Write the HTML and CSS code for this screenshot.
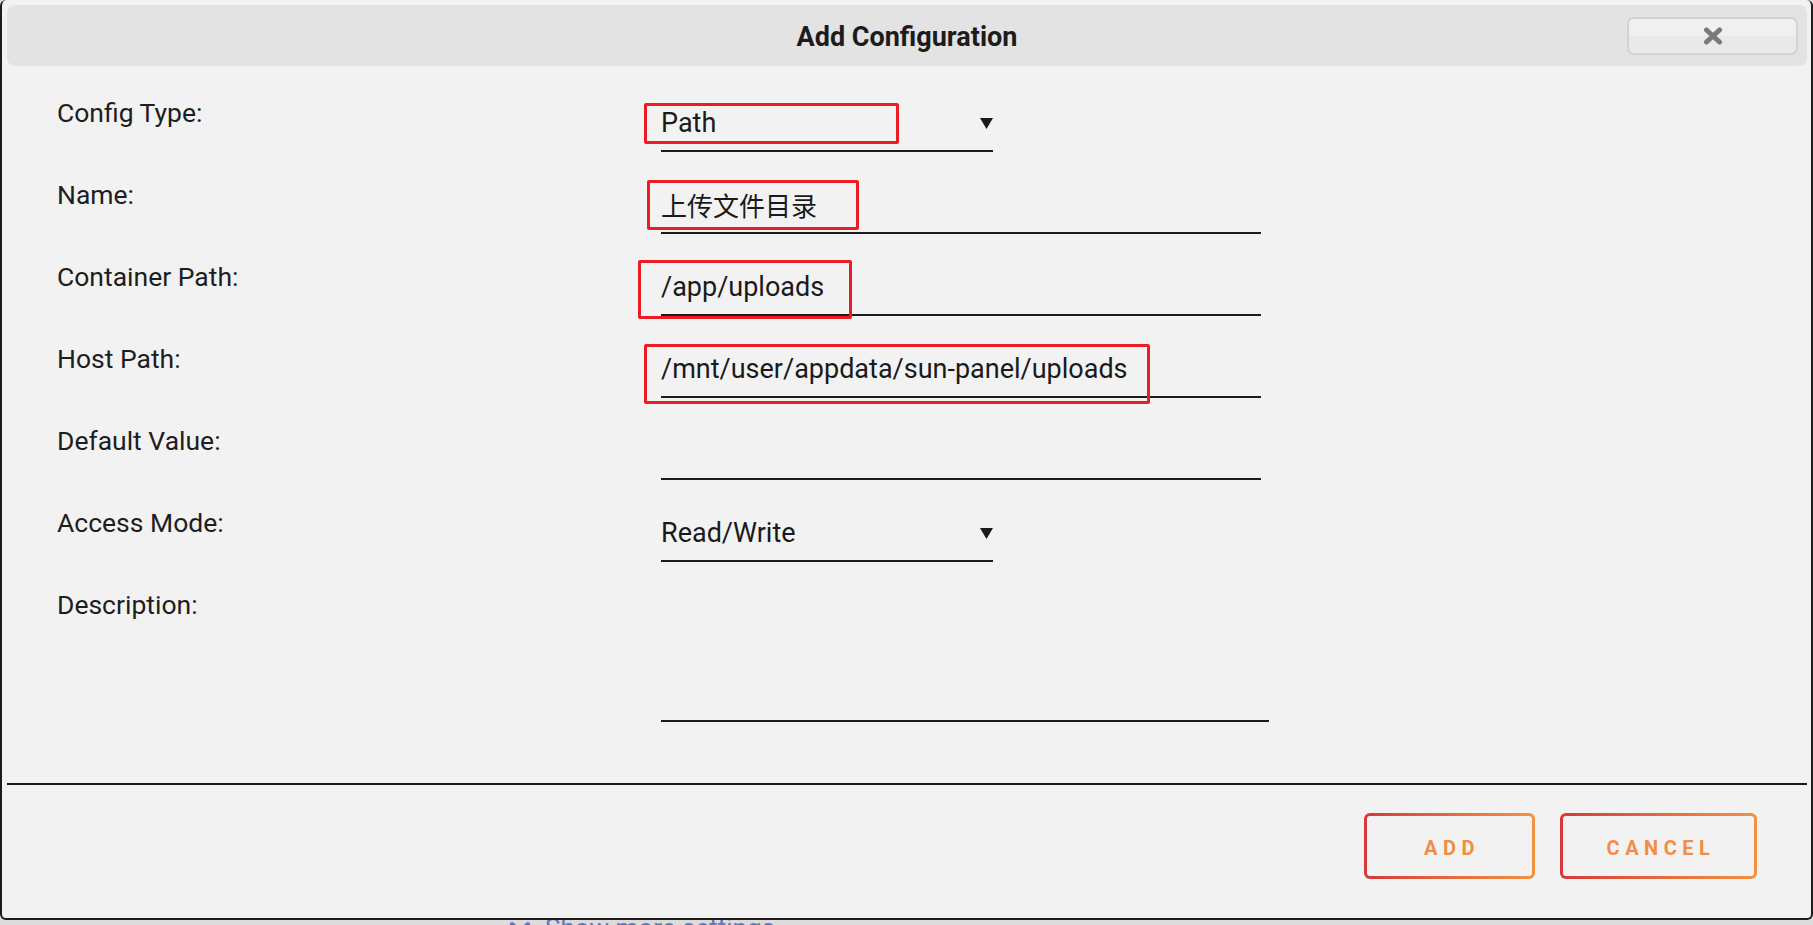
FILE: index.html
```html
<!DOCTYPE html>
<html lang="en">
<head>
<meta charset="utf-8">
<title>Add Configuration</title>
<link rel="stylesheet" href="styles.css">
</head>
<body>
<div class="dialog">
  <div class="header">
    <div class="title">Add Configuration</div>
    <button class="close" type="button" aria-label="Close">
      <svg width="20" height="18" viewBox="0 0 20 18"><path d="M3.5 3 L16.5 15 M16.5 3 L3.5 15" stroke="#7a7a7a" stroke-width="5" stroke-linecap="round"/></svg>
    </button>
  </div>

  <div class="form">
    <div class="label">Config Type:</div>
    <div class="field select">
      <span class="value">Path</span>
      <svg class="arrow" width="13" height="11" viewBox="0 0 13 11"><polygon points="0,0 13,0 6.5,11" fill="#1a1a1a"/></svg>
      <span class="mark mark-type"></span>
    </div>

    <div class="label">Name:</div>
    <div class="field text">
      <span class="value cjk">上传文件目录</span>
      <span class="mark mark-name"></span>
    </div>

    <div class="label">Container Path:</div>
    <div class="field text">
      <span class="value">/app/uploads</span>
      <span class="mark mark-container"></span>
    </div>

    <div class="label">Host Path:</div>
    <div class="field text">
      <span class="value">/mnt/user/appdata/sun-panel/uploads</span>
      <span class="mark mark-host"></span>
    </div>

    <div class="label">Default Value:</div>
    <div class="field text">
      <span class="value"></span>
    </div>

    <div class="label">Access Mode:</div>
    <div class="field select">
      <span class="value">Read/Write</span>
      <svg class="arrow" width="13" height="11" viewBox="0 0 13 11"><polygon points="0,0 13,0 6.5,11" fill="#1a1a1a"/></svg>
    </div>

    <div class="label">Description:</div>
    <div class="field desc"></div>
  </div>

  <div class="separator"></div>

  <div class="actions">
    <button class="btn btn-add" type="button"><span>ADD</span></button>
    <button class="btn btn-cancel" type="button"><span>CANCEL</span></button>
  </div>
</div>
<div class="below">
  <div class="more">
    <svg width="22" height="14" viewBox="0 0 22 14"><path d="M3 3 L11 10 L19 3" stroke="#6378b8" stroke-width="4" fill="none" stroke-linecap="round" stroke-linejoin="round"/></svg>
    <span>Show more settings</span>
  </div>
</div>
</body>
</html>
```

FILE: styles.css
```css
html, body {
  margin: 0;
  padding: 0;
}

body {
  background: #dcdcdc;
  font-family: Roboto, "Noto Sans CJK SC", sans-serif;
  color: #1b1b1b;
  overflow: hidden;
}

.dialog {
  width: 1813px;
  height: 920px;
  box-sizing: border-box;
  background: #f2f2f2;
  border: 2px solid #1c1c1c;
  border-top: 0;
  border-radius: 6px;
  display: flex;
  flex-direction: column;
}

.header {
  position: relative;
  height: 61px;
  margin: 5px 4px 0 5px;
  background: #e3e3e3;
  border-radius: 8px;
  display: flex;
  align-items: center;
  justify-content: center;
}

.title {
  font-size: 27px;
  font-weight: 700;
  color: #1c1c1c;
  line-height: 30px;
  padding-top: 2px;
}

.close {
  position: absolute;
  right: 9px;
  top: 12px;
  width: 171px;
  height: 38px;
  box-sizing: border-box;
  border: 2px solid #d3d3d3;
  border-radius: 7px;
  background: linear-gradient(#f1f1f1 0%, #efefef 50%, #e8e8e8 52%, #eaeaea 100%);
  display: flex;
  align-items: center;
  justify-content: center;
  padding: 0;
}

.form {
  margin: 32px 0 0 55px;
  display: grid;
  grid-template-columns: 604px auto;
  justify-content: start;
  row-gap: 28px;
  align-items: start;
}

.label {
  font-size: 26.5px;
  line-height: 30px;
  color: #1e1e1e;
}

.field {
  position: relative;
  margin-top: 10px;
  height: 30px;
  padding-bottom: 12px;
  border-bottom: 2px solid #1c1c1c;
  display: flex;
  align-items: center;
  font-size: 27px;
  line-height: 30px;
  color: #1a1a1a;
}

.field.select {
  width: 332px;
  justify-content: space-between;
}

.field.text {
  width: 600px;
}

.field.desc {
  width: 608px;
  height: 108px;
}

.value {
  white-space: nowrap;
}

.cjk {
  font-family: "Noto Sans CJK SC", sans-serif;
  font-size: 26px;
}

.arrow {
  display: block;
  margin-top: 0;
}

.mark {
  position: absolute;
  box-sizing: border-box;
  border: 3px solid #ec1c24;
  border-radius: 2px;
  pointer-events: none;
}

.mark-type {
  left: -17px;
  top: -5px;
  width: 255px;
  height: 41px;
}

.mark-name {
  left: -14px;
  top: -10px;
  width: 212px;
  height: 50px;
}

.mark-container {
  left: -23px;
  top: -12px;
  width: 214px;
  height: 59px;
}

.mark-host {
  left: -17px;
  top: -10px;
  width: 506px;
  height: 60px;
}

.separator {
  height: 2px;
  background: #1c1c1c;
  margin: 61px 4px 0 5px;
}

.actions {
  margin-top: 28px;
  padding-right: 54px;
  display: flex;
  justify-content: flex-end;
  gap: 25px;
}

.btn {
  height: 66px;
  box-sizing: border-box;
  border: 3px solid transparent;
  border-radius: 6px;
  background:
    linear-gradient(#f2f2f2, #f2f2f2) padding-box,
    linear-gradient(90deg, #d5393a 0%, #e5693d 50%, #f2923f 100%) border-box;
  font-family: Roboto, sans-serif;
  font-size: 20px;
  font-weight: 700;
  letter-spacing: 5.5px;
  color: #ef8e44;
  display: flex;
  align-items: center;
  justify-content: center;
  padding: 3px 0 0 5px;
}

.btn-add {
  width: 171px;
}

.btn-cancel {
  width: 197px;
}

.below {
  height: 5px;
  overflow: hidden;
}

.more {
  margin: -5px 0 0 509px;
  display: flex;
  align-items: center;
  gap: 14px;
  font-size: 26px;
  line-height: 26px;
  color: #6378b8;
}
```
